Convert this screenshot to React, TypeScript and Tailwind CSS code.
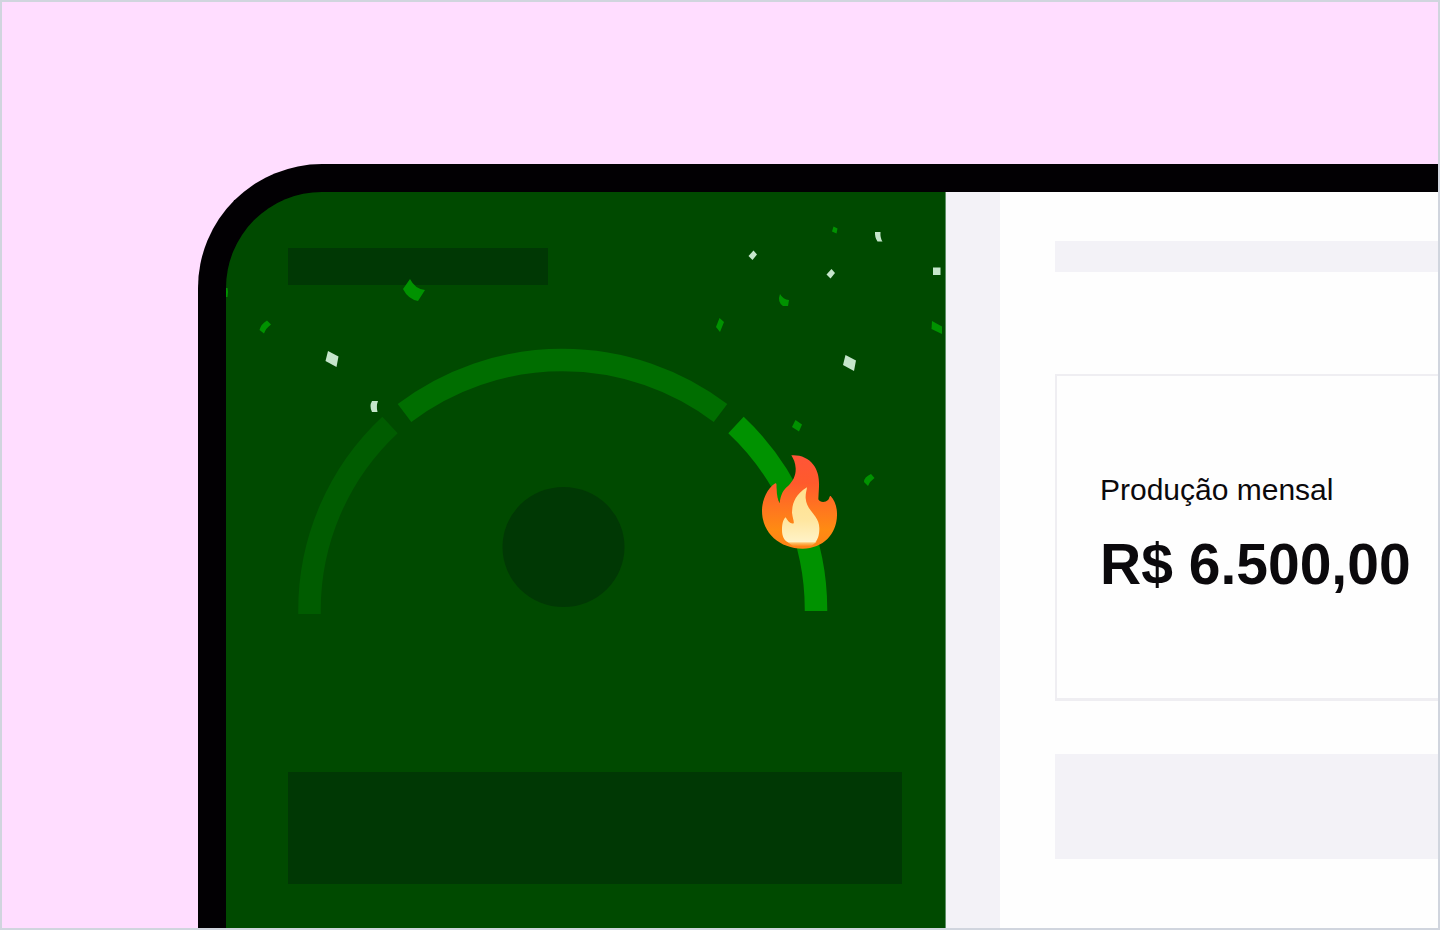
/**
 * Production goal preview
 * Tablet mockup with the goal gauge on the left and the monthly total on the right
 */

interface ConfettiPiece {
  d: string;
  tone: 'light' | 'green';
}

const confetti: ConfettiPiece[] = [
  { d: 'M0 96h1.5q1 4 0 9H0z', tone: 'green' },
  { d: 'M184 87 Q189 97 199 98 L192 109 Q182 107 177 97z', tone: 'green' },
  { d: 'M41 128.500 L45 132.500 Q40 136 38 141.500 L33.500 138 Q35 132 41 128.500z', tone: 'green' },
  { d: 'M102 159 L112.500 164.500 L110.500 175 L99.500 169z', tone: 'light' },
  { d: 'M146 209 H152 Q150 214 151.500 220 H146 Q143 214 146 209z', tone: 'light' },
  { d: 'M527.500 58.500 L531 62.500 L526.500 68 L522.500 64z', tone: 'light' },
  { d: 'M605.500 77 L609 81 L604.500 86.500 L600.500 82.500z', tone: 'light' },
  { d: 'M607.500 34.500 L611.500 36.500 L610.500 41.500 L606 39.500z', tone: 'green' },
  { d: 'M649 40 H654.500 Q654 46 656.500 49.500 H651.500 Q648.500 45 649 40z', tone: 'light' },
  { d: 'M707 75.500 H714.500 V83 H707z', tone: 'light' },
  { d: 'M554 102 Q557 107.500 563 108 L562 114 H557 Q551 110 554 102z', tone: 'green' },
  { d: 'M493.500 126 L498 130 L494 140 L490 135z', tone: 'green' },
  { d: 'M706 129 L716 134.500 V142 L705.500 137z', tone: 'green' },
  { d: 'M619.500 163 L630 168.500 L628 179 L617 173z', tone: 'light' },
  { d: 'M569.500 228 L576 232.500 L573 239.500 L566 235z', tone: 'green' },
  { d: 'M645 282 L648.500 286 Q644 289 642 294 L638 290 Q638 285 645 282z', tone: 'green' },
];

function Confetti() {
  return (
    <svg
      className="absolute top-0 left-0 pointer-events-none"
      width="720"
      height="320"
      viewBox="0 0 720 320"
      aria-hidden="true"
    >
      {confetti.map((piece) => (
        <path key={piece.d} d={piece.d} fill={piece.tone === 'light' ? '#c5e6cb' : '#009200'} />
      ))}
    </svg>
  );
}

function Flame() {
  return (
    <g transform="translate(442 92) scale(0.33333)">
      <defs>
        <linearGradient id="flame-outer" x1="0" y1="0" x2="0" y2="1">
          <stop offset="0" stopColor="#ff5538" />
          <stop offset="0.3" stopColor="#ff5a2c" />
          <stop offset="0.55" stopColor="#ff7420" />
          <stop offset="0.8" stopColor="#ff8b12" />
          <stop offset="1" stopColor="#ff8218" />
        </linearGradient>
        <linearGradient id="flame-inner" x1="0" y1="0" x2="0" y2="1">
          <stop offset="0" stopColor="#ffe08e" />
          <stop offset="0.6" stopColor="#ffe6a0" />
          <stop offset="1" stopColor="#fff3c8" />
        </linearGradient>
        <linearGradient id="flame-glow" x1="0" y1="0" x2="0" y2="1">
          <stop offset="0" stopColor="#ffd789" />
          <stop offset="1" stopColor="#ff8b1c" />
        </linearGradient>
      </defs>
      <path
        d="M154 46C180 44 205 54 220 74C234 92 238 115 237 140L235 178C240 188 256 188 264 180C269 176 267 168 272 168C284 180 292 202 291 226C290 282 250 326 188 326C120 326 66 280 66 212C66 180 82 145 106 130C111 128 109 138 110 147C110 165 114 180 119 190C121 165 130 148 145 137C160 122 168 105 167 85C166 68 161 58 154 46Z"
        fill="url(#flame-outer)"
      />
      <path d="M142 305H230L214 318H158Z" fill="url(#flame-glow)" />
      <path
        d="M201 142C165 165 157 190 156 218C158 235 163 245 161 250C152 253 144 245 137 232C128 240 126 255 126 270C126 288 132 302 144 307H226C236 295 238 280 238 265C238 225 200 215 197 175C196 162 200 152 201 142Z"
        fill="url(#flame-inner)"
      />
    </g>
  );
}

function GoalGauge() {
  return (
    <svg
      className="block ml-[10px] mt-[63px] overflow-visible"
      width="530"
      height="266"
      viewBox="0 0 530 266"
      role="img"
      aria-label="Meta"
    >
      <g fill="none" strokeWidth="22.5">
        <path d="M11.500 266V264A253 253 0 0 1 92 77" stroke="#005c00" />
        <path d="M106.500 65A262 262 0 0 1 422.500 65" stroke="#006e00" />
        <path d="M438 77A253 253 0 0 1 518 263" stroke="#009200" />
      </g>
      <ellipse cx="265.500" cy="199" rx="61" ry="60" fill="#003804" />
      <Flame />
    </svg>
  );
}

function GoalPanel() {
  return (
    <section className="relative w-[720px] shrink-0 border-r border-[#5f9168] bg-[#004a00] pt-14 pl-[62px] pr-[43px]">
      <div className="w-[260px] h-[37px] bg-[#003804]" />
      <GoalGauge />
      <div className="mt-[158px] h-28 bg-[#003804]" />
      <Confetti />
    </section>
  );
}

function ProductionCard({ label, value }: { label: string; value: string }) {
  return (
    <dl className="mt-[102px] border-2 border-b-3 border-r-0 border-[#efeef2] pt-24 pb-[102px] pl-[43px] text-[#0b090c] whitespace-nowrap">
      <dt className="text-[30px] leading-9">{label}</dt>
      <dd className="mt-6 text-[57px] leading-16 font-bold">{value}</dd>
    </dl>
  );
}

export default function App() {
  return (
    <div className="h-screen overflow-hidden flex flex-col border-2 border-[#d0d5de] bg-[#ffddff] pt-[162px] pl-[196px] font-['Liberation_Sans',Arial,sans-serif]">
      <main className="grow min-h-0 flex overflow-hidden rounded-tl-[124px] border-t-28 border-l-28 border-[#020003] bg-[#020003]">
        <GoalPanel />
        <div className="w-[54px] shrink-0 bg-[#f3f2f7]" />
        <section className="grow min-w-0 pt-[49px] pl-[55px] bg-[#fefefe]">
          <div className="h-[31px] bg-[#f3f2f7]" />
          <ProductionCard label="Produção mensal" value="R$ 6.500,00" />
          <div className="mt-[53px] h-[105px] bg-[#f3f2f7]" />
        </section>
      </main>
    </div>
  );
}
